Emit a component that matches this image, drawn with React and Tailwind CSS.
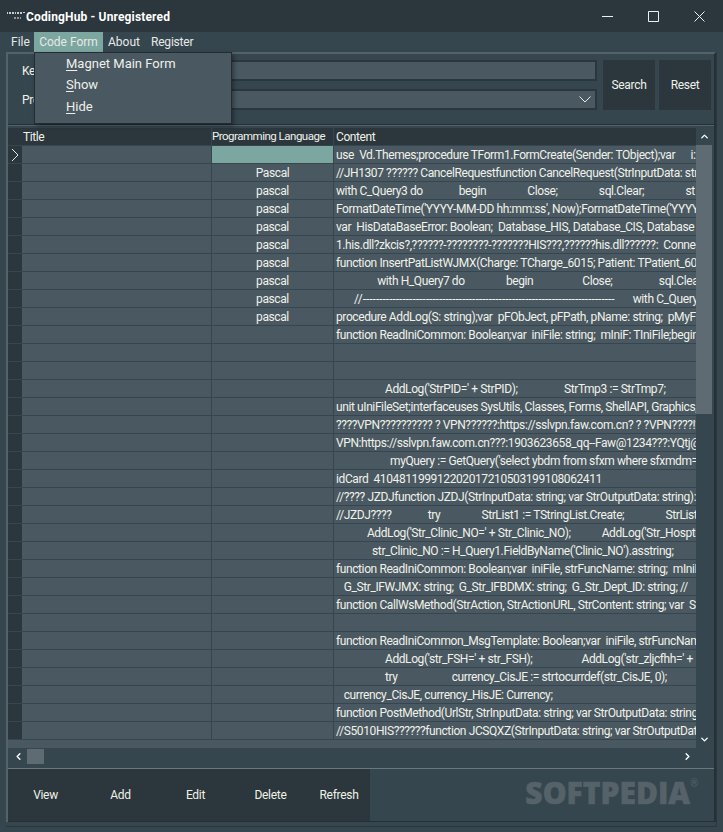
import React from 'react';
import { ChevronDown, ChevronLeft, ChevronRight, ChevronUp } from 'lucide-react';

const sp = (n) => ' '.repeat(n);

const rows = [
    ['', `use  Vd.Themes;procedure TForm1.FormCreate(Sender: TObject);var${sp(6)}i:i`],
    ['Pascal', '//JH1307 ?????? CancelRequestfunction CancelRequest(StrInputData: strin'],
    ['pascal', `with C_Query3 do${sp(14)}begin${sp(16)}Close;${sp(16)}sql.Clear;${sp(16)}st`],
    ['pascal', "FormatDateTime('YYYY-MM-DD hh:mm:ss', Now);FormatDateTime('YYYYMM"],
    ['pascal', 'var  HisDataBaseError: Boolean;  Database_HIS, Database_CIS, Database'],
    ['pascal', '1.his.dll?zkcis?,??????-????????-???????HIS???,??????his.dll??????:  Connect'],
    ['pascal', 'function InsertPatListWJMX(Charge: TCharge_6015; Patient: TPatient_601'],
    ['pascal', `${sp(16)}with H_Query7 do${sp(16)}begin${sp(19)}Close;${sp(18)}sql.Clea`],
    ['pascal', <>{sp(7)}<span className="tracking-normal">//{'-'.repeat(76)}</span>{sp(7)}with C_Query</>],
    ['pascal', 'procedure AddLog(S: string);var  pFObJect, pFPath, pName: string;  pMyF'],
    ['', 'function ReadIniCommon: Boolean;var  iniFile: string;  mIniF: TIniFile;begin'],
    ['', ''],
    ['', ''],
    ['', `${sp(19)}AddLog('StrPID=' + StrPID);${sp(18)}StrTmp3 := StrTmp7;`],
    ['', 'unit uIniFileSet;interfaceuses SysUtils, Classes, Forms, ShellAPI, Graphics,'],
    ['', '????VPN?????????? ? VPN??????:https://sslvpn.faw.com.cn? ? ?VPN????!???'],
    ['', 'VPN:https://sslvpn.faw.com.cn???:1903623658_qq--Faw@1234???:YQtj@'],
    ['', `${sp(21)}myQuery := GetQuery('select ybdm from sfxm where sfxmdm='`],
    ['', 'idCard  410481199912202017210503199108062411'],
    ['', '//???? JZDJfunction JZDJ(StrInputData: string; var StrOutputData: string):'],
    ['', `//JZDJ????${sp(14)}try${sp(16)}StrList1 := TStringList.Create;${sp(16)}StrList`],
    ['', `${sp(12)}AddLog('Str_Clinic_NO=' + Str_Clinic_NO);${sp(12)}AddLog('Str_Hosptia`],
    ['', `${sp(14)}str_Clinic_NO := H_Query1.FieldByName('Clinic_NO').asstring;`],
    ['', 'function ReadIniCommon: Boolean;var  iniFile, strFuncName: string;  mIniF:'],
    ['', `${sp(3)}G_Str_IFWJMX: string;  G_Str_IFBDMX: string;  G_Str_Dept_ID: string; //`],
    ['', 'function CallWsMethod(StrAction, StrActionURL, StrContent: string; var  St'],
    ['', ''],
    ['', 'function ReadIniCommon_MsgTemplate: Boolean;var  iniFile, strFuncName:'],
    ['', `${sp(19)}AddLog('str_FSH=' + str_FSH);${sp(19)}AddLog('str_zljcfhh=' +`],
    ['', `${sp(19)}try${sp(21)}currency_CisJE := strtocurrdef(str_CisJE, 0);`],
    ['', `${sp(3)}currency_CisJE, currency_HisJE: Currency;`],
    ['', 'function PostMethod(UrlStr, StrInputData: string; var StrOutputData: string'],
    ['', '//S5010HIS??????function JCSQXZ(StrInputData: string; var StrOutputData'],
];

const Underlined = ({ first, rest }) => (
    <span><span className="underline underline-offset-2">{first}</span>{rest}</span>
);

export default function App() {
    return (
        <div className="w-[723px] h-[832px] overflow-hidden bg-[#36464e] text-[12px] tracking-[-0.3px] text-[#f0f2ea] flex flex-col relative" style={{ fontFamily: 'Roboto, "Liberation Sans", sans-serif' }}>
            {/* title bar */}
            <div className="h-[32px] shrink-0 bg-[#2b363d] flex items-center">
                <svg width="18" height="12" viewBox="0 0 18 12" className="ml-[7px]">
                    <path d="M0 2h1v2H0zM2 2h2v2H2zM5 2h2v2H5zM8 2h1v2H8zM10 2h2v2h-2zM13 2h2v2h-2zM16 2h2v1h-2z" fill="#c9cdcf" />
                    <path d="M7 7h2v2H7zM10 7h2v2h-2zM13 7h1v2h-1z" fill="#8d979b" />
                </svg>
                <span className="ml-[1px] pt-[2px] font-bold text-white text-[12px] tracking-[0.15px]">CodingHub - Unregistered</span>
                <div className="ml-auto mr-[1px] flex items-center text-[#eef0f0]">
                    <div className="w-[46px] flex justify-center">
                        <svg width="11" height="11" viewBox="0 0 11 11"><path d="M0 5.5h11" stroke="currentColor" /></svg>
                    </div>
                    <div className="w-[46px] flex justify-center">
                        <svg width="11" height="11" viewBox="0 0 11 11" fill="none"><path d="M.5.5h10v10H.5z" stroke="currentColor" /></svg>
                    </div>
                    <div className="w-[46px] flex justify-center">
                        <svg width="11" height="11" viewBox="0 0 11 11" fill="none"><path d="M.5.5l10 10M10.5.5l-10 10" stroke="currentColor" /></svg>
                    </div>
                </div>
            </div>

            {/* menu bar */}
            <div className="h-[20px] shrink-0 flex items-center pl-[6px] text-[#e6e9e6] tracking-normal">
                <div className="w-[28px] pl-[5px] h-full flex items-center">File</div>
                <div className="w-[69px] h-full bg-[#7ca6a0] flex items-center justify-center">Code Form</div>
                <div className="w-[43px] pl-[5px] h-full flex items-center">About</div>
                <div className="pl-[5px] h-full flex items-center tracking-[-0.2px]">Register</div>
            </div>

            {/* dropdown */}
            <div className="absolute left-[34px] top-[52px] w-[198px] h-[72px] bg-[#4a5861] border border-[#232c31] shadow-[2px_2px_4px_rgba(0,0,0,0.35)] flex flex-col pl-[31px] text-[#eef0ea] tracking-normal z-10">
                <div className="h-[21px] flex items-center text-[13px]"><Underlined first="M" rest="agnet Main Form" /></div>
                <div className="h-[22px] flex items-center text-[13px]"><Underlined first="S" rest="how" /></div>
                <div className="h-[21px] flex items-center text-[13px]"><Underlined first="H" rest="ide" /></div>
            </div>

            {/* outer frame */}
            <div className="ml-[6px] mr-[6px] h-[775px] border-r border-b border-[#2b363d]">
                {/* main panel */}
                <div className="h-[770px] flex flex-col border-l-2 border-t-2 border-r-2 border-l-[#55626a] border-t-[#55626a] border-r-[#262f35]">
                    {/* search */}
                    <div className="h-[71px] shrink-0 flex pt-[6px] border-b border-[#262f35]">
                        <div className="w-[14px]" />
                        <div className="w-[30px] flex flex-col">
                            <div className="h-[21px] flex items-center">Key</div>
                            <div className="h-[8px]" />
                            <div className="h-[21px] flex items-center">Pro</div>
                        </div>
                        <div className="w-[545px] flex flex-col gap-[8px]">
                            <div className="h-[21px] bg-[#4a5861] border-2 border-[#2b363d]" />
                            <div className="h-[21px] bg-[#4a5861] border-2 border-[#2b363d] flex items-center justify-end pr-[4px]">
                                <svg width="12" height="7" viewBox="0 0 12 7" fill="none"><path d="M.5.5L6 6l5.5-5.5" stroke="#e8ebe8" /></svg>
                            </div>
                        </div>
                        <div className="ml-[6px] w-[52px] h-[50px] bg-[#2b363d] flex items-center justify-center">Search</div>
                        <div className="ml-[4px] w-[52px] h-[50px] bg-[#2b363d] flex items-center justify-center">Reset</div>
                    </div>

                    {/* grid */}
                    <div className="h-[643px] shrink-0 flex flex-col pb-[3px] border-t border-[#55626a]">
                        <div className="flex-1 flex min-h-0 pt-[2px]">
                            <div className="w-[688px] flex flex-col overflow-hidden bg-[#4a5861] tracking-[-0.4px]">
                                <div className="h-[17px] shrink-0 flex bg-[#2b363d]">
                                    <div className="w-[14px]" />
                                    <div className="w-[189px] pl-[1px] flex items-center">Title</div>
                                    <div className="w-[122px] flex items-center border-l border-[#36464e] whitespace-nowrap text-[11.5px] tracking-[-0.5px]">Programming Language</div>
                                    <div className="flex-1 pl-[2px] flex items-center border-l border-[#36464e]">Content</div>
                                </div>
                                {rows.map((row, i) => (
                                    <div key={i} className="h-[18px] shrink-0 flex border-t border-[#36464e]">
                                        <div className="w-[14px] shrink-0 bg-[#2b363d] flex items-center justify-center">
                                            {i === 0 && (
                                                <svg width="8" height="14" viewBox="0 0 8 14" fill="none"><path d="M1 1l6 6-6 6" stroke="#e6e9e6" /></svg>
                                            )}
                                        </div>
                                        <div className="w-[189px] shrink-0" />
                                        <div className={`w-[122px] shrink-0 flex items-center justify-center border-l border-[#36464e] ${i === 0 ? 'bg-[#7ca6a0]' : ''}`}>{row[0]}</div>
                                        <div className="flex-1 min-w-0 pl-[2px] flex items-center border-l border-[#36464e] whitespace-pre overflow-hidden"><span>{row[1]}</span></div>
                                    </div>
                                ))}
                                <div className="flex-1 border-t border-[#36464e]" />
                            </div>
                            {/* vertical scrollbar */}
                            <div className="w-[16px] shrink-0 flex flex-col items-stretch">
                                <div className="h-[17px] flex items-center justify-center"><ChevronUp size={11} strokeWidth={3} className="text-white" /></div>
                                <div className="h-[269px] bg-[#5f6b72]" />
                                <div className="flex-1" />
                                <div className="h-[17px] flex items-center justify-center"><ChevronDown size={11} strokeWidth={3} className="text-white" /></div>
                            </div>
                        </div>
                        {/* horizontal scrollbar */}
                        <div className="h-[17px] shrink-0 flex items-center pl-[2px]">
                            <div className="w-[17px] flex justify-center"><ChevronLeft size={11} strokeWidth={3} className="text-white" /></div>
                            <div className="w-[17px] h-[15px] bg-[#5f6b72]" />
                            <div className="ml-auto mr-[18px] w-[17px] flex justify-center"><ChevronRight size={11} strokeWidth={3} className="text-white" /></div>
                        </div>
                    </div>

                    {/* toolbar */}
                    <div className="h-[54px] shrink-0 border-t border-b border-t-[#6b777d] border-b-[#262f35] flex items-stretch">
                        <div className="w-[362px] bg-[#2b363d] flex items-center text-[#f0f2e6]">
                            <div className="w-[75px] text-center">View</div>
                            <div className="w-[75px] text-center">Add</div>
                            <div className="w-[75px] text-center">Edit</div>
                            <div className="w-[75px] text-center">Delete</div>
                            <div className="w-[62px] text-center">Refresh</div>
                        </div>
                        <div className="flex-1 flex items-center justify-end pr-[16px] pb-[4px] tracking-normal">
                            <span className="font-extrabold text-[#566269] text-[30px] leading-none [-webkit-text-stroke:0.6px_#566269]" style={{ fontFamily: '"Open Sans", sans-serif' }}>SOFTPEDIA</span>
                            <span className="text-[#566269] text-[10px] self-start mt-[7px]">®</span>
                        </div>
                    </div>
                </div>
            </div>
        </div>
    );
}
